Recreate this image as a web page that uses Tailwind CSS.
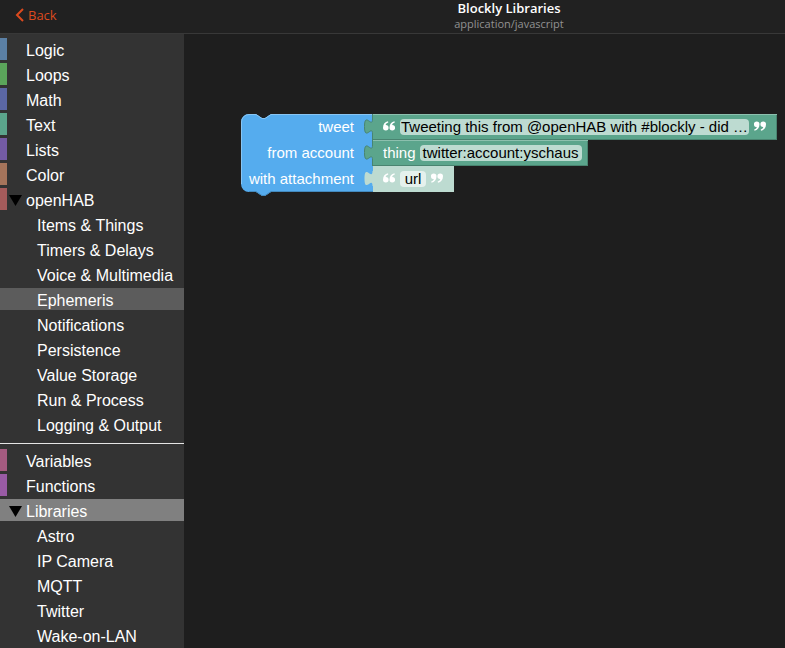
<!DOCTYPE html>
<html lang="en">
<head>
    <meta charset="UTF-8">
    <meta name="viewport" content="width=device-width, initial-scale=1.0">
    <title>Blockly Libraries</title>
    <script src="https://cdn.jsdelivr.net/npm/@tailwindcss/browser@4"></script>
</head>
<body class="bg-[#1e1e1e] text-white">
    <div class="flex flex-col h-screen overflow-hidden">
        <header class="flex shrink-0 h-[34px] bg-[#212121] border-b border-[#383838] font-['Open_Sans',sans-serif]">
            <a href="#" class="flex items-center w-[233px] pl-[15px] pb-0.5 gap-1 text-[13px] text-[#dc4a1e]">
                <svg class="w-[9px] h-[14px] mb-0.5" viewBox="0 0 9 14" fill="none" stroke="currentColor" stroke-width="2">
                    <path d="M8 1L2 7l6 6"/>
                </svg>
                Back
            </a>
            <div class="flex-1 text-center">
                <h1 class="text-[13px] leading-4 font-semibold">Blockly Libraries</h1>
                <p class="text-[11px] leading-4 text-[#929292]">application/javascript</p>
            </div>
        </header>

        <div class="flex flex-1 min-h-0">
            <!-- Toolbox -->
            <nav class="w-[184px] shrink-0 overflow-hidden bg-[#333] pt-1 text-[16px] leading-[26px] font-['Liberation_Sans',sans-serif]">
                <ul class="flex flex-col gap-[3px] whitespace-nowrap">
                    <li class="h-[22px] pl-[19px] border-l-[7px] border-[#5b80a5]"><a href="#">Logic</a></li>
                    <li class="h-[22px] pl-[19px] border-l-[7px] border-[#5ba55b]"><a href="#">Loops</a></li>
                    <li class="h-[22px] pl-[19px] border-l-[7px] border-[#5b67a5]"><a href="#">Math</a></li>
                    <li class="h-[22px] pl-[19px] border-l-[7px] border-[#5ba58c]"><a href="#">Text</a></li>
                    <li class="h-[22px] pl-[19px] border-l-[7px] border-[#745ba5]"><a href="#">Lists</a></li>
                    <li class="h-[22px] pl-[19px] border-l-[7px] border-[#a5745b]"><a href="#">Color</a></li>
                    <li class="flex items-start h-[22px] pl-[2px] gap-1 border-l-[7px] border-[#a55b5b]">
                        <svg class="w-[13px] h-[11px] mt-[7px]" viewBox="0 0 13 11"><path d="M0 0h13L6.500 11z"/></svg>
                        <a href="#">openHAB</a>
                    </li>
                    <li class="h-[22px] pl-[37px]"><a href="#">Items &amp; Things</a></li>
                    <li class="h-[22px] pl-[37px]"><a href="#">Timers &amp; Delays</a></li>
                    <li class="h-[22px] pl-[37px]"><a href="#">Voice &amp; Multimedia</a></li>
                    <li class="h-[22px] pl-[37px] bg-[#5c5c5c]"><a href="#">Ephemeris</a></li>
                    <li class="h-[22px] pl-[37px]"><a href="#">Notifications</a></li>
                    <li class="h-[22px] pl-[37px]"><a href="#">Persistence</a></li>
                    <li class="h-[22px] pl-[37px]"><a href="#">Value Storage</a></li>
                    <li class="h-[22px] pl-[37px]"><a href="#">Run &amp; Process</a></li>
                    <li class="h-[22px] pl-[37px]"><a href="#">Logging &amp; Output</a></li>
                </ul>
                <hr class="mt-2 mb-[5px] border-[#e5e5e5]">
                <ul class="flex flex-col gap-[3px] whitespace-nowrap">
                    <li class="h-[22px] pl-[19px] border-l-[7px] border-[#a55b80]"><a href="#">Variables</a></li>
                    <li class="h-[22px] pl-[19px] border-l-[7px] border-[#995ba5]"><a href="#">Functions</a></li>
                    <li class="flex items-start h-[22px] pl-[9px] gap-1 bg-[#808080]">
                        <svg class="w-[13px] h-[11px] mt-[7px]" viewBox="0 0 13 11"><path d="M0 0h13L6.500 11z"/></svg>
                        <a href="#">Libraries</a>
                    </li>
                    <li class="h-[22px] pl-[37px]"><a href="#">Astro</a></li>
                    <li class="h-[22px] pl-[37px]"><a href="#">IP Camera</a></li>
                    <li class="h-[22px] pl-[37px]"><a href="#">MQTT</a></li>
                    <li class="h-[22px] pl-[37px]"><a href="#">Twitter</a></li>
                    <li class="h-[22px] pl-[37px]"><a href="#">Wake-on-LAN</a></li>
                </ul>
            </nav>

            <!-- Workspace -->
            <main class="relative flex-1 overflow-hidden text-[15px] leading-[26px] font-['Liberation_Sans',sans-serif]">
                <svg class="hidden">
                    <symbol id="quote" viewBox="0 0 12 10">
                        <path d="M5 .3C2 .8 0 3.100 0 6.700A2.800 2.800 0 1 0 2.700 3.900C2.900 2.900 3.700 2 5.300 1.600zM11.500.3C8.500.8 6.500 3.100 6.500 6.700A2.800 2.800 0 1 0 9.200 3.900C9.400 2.900 10.200 2 11.800 1.600z"/>
                    </symbol>
                    <symbol id="tab" viewBox="0 0 10 26">
                        <path stroke="none" d="M10 5H8.500c0 10-8-8-8 7.500s8-2.500 8 7.500H10z"/>
                        <path fill="none" d="M8.500 0v5c0 10-8-8-8 7.500s8-2.500 8 7.500v6"/>
                    </symbol>
                </svg>

                <div class="absolute left-[57px] top-20 flex">
                    <svg class="absolute left-0 top-0 w-[132px] h-[83px]" viewBox="0 0 132 83">
                        <path fill="#55acee" d="M0 8a8 8 0 0 1 8-8h7l6 4h3l6-4h102v78H30l-6 4h-3l-6-4H8a8 8 0 0 1-8-8z"/>
                        <path fill="none" stroke="#88c5f3" d="M.5 70V8A7.500 7.500 0 0 1 8 .5h7l6 4h3l6-4h102"/>
                        <path fill="none" stroke="#448abe" d="M8 77.500h7l6 4h3l6-4h102"/>
                    </svg>
                    <div class="relative w-[132px] pr-[19px] text-right whitespace-nowrap">
                        <label class="block" for="tweet">tweet</label>
                        <label class="block" for="account">from account</label>
                        <label class="block" for="attachment">with attachment</label>
                    </div>
                    <div class="relative flex flex-col items-start">
                        <div class="relative flex items-center h-[26px] pl-[10px] pr-[11px] gap-[5px] bg-[#5ba58c] shadow-[inset_0_1px_#8cc0ae,inset_-1px_-1px_#498470]">
                            <svg class="absolute -left-[9px] top-0 w-[10px] h-[26px] fill-[#5ba58c] stroke-[#498470]"><use href="#tab"/></svg>
                            <svg class="self-start w-3 h-[10px] mt-[7px] fill-white"><use href="#quote"/></svg>
                            <input id="tweet" type="text" value="Tweeting this from @openHAB with #blockly - did …" class="w-[349px] h-4 px-px rounded-[4px] bg-[#bddbd1] text-center text-black">
                            <svg class="self-start w-3 h-[10px] mt-[7px] fill-white rotate-180"><use href="#quote"/></svg>
                        </div>
                        <div class="relative flex items-center h-[26px] pl-[10px] pr-[6px] gap-1 bg-[#5ba58c] shadow-[inset_0_1px_#8cc0ae,inset_-1px_-1px_#498470]">
                            <svg class="absolute -left-[9px] top-0 w-[10px] h-[26px] fill-[#5ba58c] stroke-[#498470]"><use href="#tab"/></svg>
                            <label for="account">thing</label>
                            <input id="account" type="text" value="twitter:account:yschaus" class="w-[162px] h-4 px-px rounded-[4px] bg-[#bddbd1] text-center text-black">
                        </div>
                        <div class="relative flex items-center h-[26px] pl-[10px] pr-[11px] gap-[5px] bg-[#bddbd1]">
                            <svg class="absolute -left-[9px] top-0 w-[10px] h-[26px] fill-[#bddbd1]"><use href="#tab"/></svg>
                            <svg class="self-start w-3 h-[10px] mt-[7px] fill-white"><use href="#quote"/></svg>
                            <input id="attachment" type="text" value="url" class="w-[26px] h-4 px-px rounded-[4px] bg-[#e5f1ed] text-center text-black">
                            <svg class="self-start w-3 h-[10px] mt-[7px] fill-white rotate-180"><use href="#quote"/></svg>
                        </div>
                    </div>
                </div>
            </main>
        </div>
    </div>
</body>
</html>
